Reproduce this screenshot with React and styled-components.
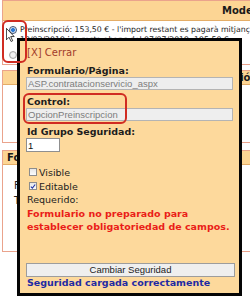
import React from "react";
import styled, { createGlobalStyle } from "styled-components";

const GlobalStyle = createGlobalStyle`
  html, body {
    margin: 0;
    padding: 0;
    background: #ffffff;
    overflow: hidden;
  }
  body {
    font-family: "DejaVu Sans", Verdana, sans-serif;
    color: #1e1e1e;
  }
`;

const Page = styled.div`
  position: relative;
  width: 250px;
  height: 303px;
  overflow: hidden;
  background: #fff;
`;

const Column = styled.div`
  display: flex;
  flex-direction: column;
  width: 600px;
  padding-left: 2px;
`;

const Panel = styled.section`
  box-sizing: border-box;
  height: ${({ $h }) => $h}px;
  margin-bottom: ${({ $gap }) => $gap || 0}px;
  border: 1px solid #eaa38c;
  display: flex;
  flex-direction: column;
`;

const PanelHeader = styled.h3`
  margin: 0;
  box-sizing: border-box;
  height: ${({ $h }) => $h || 14}px;
  background: #fcd594;
  border-bottom: 1px solid #e4ad67;
  font-size: 10px;
  font-weight: 700;
  line-height: ${({ $h }) => ($h || 14) - 1}px;
  padding-left: ${({ $indent }) => $indent || 4}px;
  white-space: nowrap;
  color: #1a1a1a;
`;

const OptionList = styled.div`
  display: flex;
  flex-direction: column;
  gap: 6px;
  padding: 4px 0 0 6px;
`;

const OptionRow = styled.label`
  display: flex;
  align-items: flex-start;
  gap: 3px;
  font-size: 7.8px;
  line-height: 9.5px;
  white-space: nowrap;
`;

const Radio = styled.span`
  flex: none;
  box-sizing: border-box;
  width: 8px;
  height: 8px;
  margin-top: 1px;
  border-radius: 50%;
  border: 1px solid ${({ $on }) => ($on ? "#3a4f73" : "#a8a8a8")};
  background: ${({ $on }) =>
    $on
      ? "radial-gradient(circle, #2f7bd6 0 1.6px, #bcd3ee 2.2px, #f4f7fb 3px)"
      : "radial-gradient(circle, #f2f2f2 0 2px, #dcdcdc 3px)"};
`;

const OptionText = styled.span`
  display: flex;
  flex-direction: column;
`;

const SplitBody = styled.div`
  display: flex;
  padding-top: ${({ $top }) => $top || 0}px;
  font-size: 10px;
  white-space: nowrap;
`;

const LabelColumn = styled.div`
  width: ${({ $w }) => $w}px;
  padding-left: ${({ $left }) => $left || 0}px;
  padding-top: ${({ $top }) => $top || 0}px;
  display: flex;
  flex-direction: column;
  line-height: ${({ $lh }) => $lh || 10}px;
`;

const ValueColumn = styled.div`
  display: flex;
  flex-direction: column;
  gap: ${({ $gap }) => $gap || 0}px;
  line-height: 10px;
`;

const Cell = styled.span`
  color: ${({ $tone }) => $tone || "#1e1e1e"};
  margin-top: ${({ $top }) => $top || 0}px;
`;

const FieldBox = styled.span`
  box-sizing: border-box;
  display: block;
  height: 11px;
  border: 1px solid #9a9a9a;
  font-family: "Liberation Sans", Arial, sans-serif;
  font-size: 9px;
  line-height: 9px;
  padding-left: 2px;
  color: #555;
`;

const OrangeButton = styled.span`
  box-sizing: border-box;
  display: block;
  height: 13px;
  margin-top: ${({ $top }) => $top || 0}px;
  background: #f0a04b;
  border: 1px solid #d7852c;
  font-size: 9px;
  line-height: 11px;
  color: #222;
`;

/* popup */

const Popup = styled.div`
  position: absolute;
  left: 17px;
  top: 38px;
  width: 225px;
  height: 258px;
  box-sizing: border-box;
  border: 3px solid #050505;
  background: #fdd99c;
  padding: 5px 6px 0 6px;
  display: flex;
  flex-direction: column;
  z-index: 5;
`;

const CloseLink = styled.a`
  font-size: 10px;
  line-height: 13px;
  color: #a23b2a;
  padding-left: 1px;
  margin-bottom: 5px;
`;

const Label = styled.div`
  font-size: 9.5px;
  line-height: 13px;
  font-weight: ${({ $plain }) => ($plain ? 400 : 700)};
  color: ${({ $tone }) => $tone || "#1c1c1c"};
  margin-top: ${({ $top }) => $top || 0}px;
  padding-left: 1px;
  white-space: nowrap;
`;

const TextInput = styled.input`
  box-sizing: border-box;
  width: ${({ $w }) => $w || 207}px;
  height: ${({ $h }) => $h || 13}px;
  margin: 0;
  padding: 0 1px;
  border: 1px solid ${({ $readOnly }) => ($readOnly ? "#b4b4b4" : "#8f8f8f")};
  background: ${({ $readOnly }) => ($readOnly ? "#eeeeee" : "#ffffff")};
  color: ${({ $readOnly }) => ($readOnly ? "#7d7d7d" : "#111")};
  font-family: "Liberation Sans", Arial, sans-serif;
  font-size: 9.5px;
  outline: none;
`;

const CheckRow = styled.label`
  display: flex;
  align-items: center;
  gap: 2px;
  height: 14px;
  padding-left: 3px;
  margin-top: ${({ $top }) => $top || 0}px;
  font-size: 9.5px;
  color: #1c1c1c;
`;

const CheckBox = styled.span`
  box-sizing: border-box;
  width: 8px;
  height: 8px;
  border: 1px solid #8c8c8c;
  background: linear-gradient(#e6e6e6, #fbfbfb);
  display: flex;
  align-items: center;
  justify-content: center;
`;

const ActionButton = styled.button`
  box-sizing: border-box;
  width: 209px;
  height: 14px;
  margin: 30px 0 0 0;
  padding: 0;
  border: 1px solid #9d9d9d;
  background: #efefef;
  font-family: "Liberation Sans", Arial, sans-serif;
  font-size: 9.5px;
  line-height: 12px;
  color: #1c1c1c;
`;

const Status = styled.div`
  font-size: 9.5px;
  line-height: 12px;
  font-weight: 700;
  color: #1f2aa3;
  padding-left: 1px;
  white-space: nowrap;
`;

/* annotations */

const Highlight = styled.div`
  position: absolute;
  box-sizing: border-box;
  left: ${({ $x }) => $x}px;
  top: ${({ $y }) => $y}px;
  width: ${({ $w }) => $w}px;
  height: ${({ $h }) => $h}px;
  border: 2.5px solid #d02c22;
  border-radius: 6px;
  z-index: 8;
  pointer-events: none;
`;

const Cursor = styled.svg`
  position: absolute;
  left: 6px;
  top: 28px;
  z-index: 9;
`;

const Tick = () => (
  <svg width="7" height="7" viewBox="0 0 7 7">
    <path d="M1 3.6 L2.8 5.4 L6 1.2" fill="none" stroke="#2438a8" strokeWidth="1.3" />
  </svg>
);

export default function App() {
  return (
    <>
      <GlobalStyle />
      <Page>
        <Column>
          <Panel $h={65} $gap={5}>
            <PanelHeader $h={20} $indent={219}>
              Modelo de pago
            </PanelHeader>
            <OptionList>
              <OptionRow>
                <Radio $on />
                <OptionText>
                  <span>Preinscripció: 153,50 € - l'import restant es pagarà mitjançant rebut</span>
                  <span>10/03/2019 i la resta abans del 07/07/2019: 195,50 €</span>
                </OptionText>
              </OptionRow>
              <OptionRow>
                <Radio />
                <OptionText>
                  <span>Pagament únic: 349,00 €</span>
                </OptionText>
              </OptionRow>
            </OptionList>
          </Panel>

          <Panel $h={73} $gap={7}>
            <PanelHeader $indent={193}>Inscripció</PanelHeader>
            <SplitBody $top={19}>
              <LabelColumn $w={240} $left={28}>
                <Cell>Observacions</Cell>
                <Cell>Estat</Cell>
              </LabelColumn>
              <ValueColumn>
                <Cell>necessàries</Cell>
                <Cell $tone="#8a1a2a">obligatori</Cell>
              </ValueColumn>
            </SplitBody>
          </Panel>

          <Panel $h={102}>
            <PanelHeader $h={14}>Formulari de contacte</PanelHeader>
            <SplitBody>
              <LabelColumn $w={240} $left={11} $top={13} $lh={15}>
                <Cell>Forma de pagament</Cell>
                <Cell>Telèfon</Cell>
              </LabelColumn>
              <ValueColumn $gap={3}>
                <FieldBox>8</FieldBox>
                <FieldBox>R</FieldBox>
                <OrangeButton $top={20}>r</OrangeButton>
                <Cell $top={4}>ar</Cell>
              </ValueColumn>
            </SplitBody>
          </Panel>
        </Column>

        <Popup>
          <CloseLink>[X] Cerrar</CloseLink>
          <Label>Formulario/Página:</Label>
          <TextInput $readOnly readOnly value="ASP.contratacionservicio_aspx" />
          <Label $top={5}>Control:</Label>
          <TextInput $readOnly readOnly value="OpcionPreinscripcion" />
          <Label $top={4}>Id Grupo Seguridad:</Label>
          <TextInput $w={34} $h={14} readOnly value="1" />
          <CheckRow $top={13}>
            <CheckBox />
            Visible
          </CheckRow>
          <CheckRow>
            <CheckBox>
              <Tick />
            </CheckBox>
            Editable
          </CheckRow>
          <Label $plain>Requerido:</Label>
          <Label $tone="#ea1d18" $top={1}>
            Formulario no preparado para
          </Label>
          <Label $tone="#ea1d18">establecer obligatoriedad de campos.</Label>
          <ActionButton>Cambiar Seguridad</ActionButton>
          <Status>Seguridad cargada correctamente</Status>
        </Popup>

        <Highlight $x={2} $y={20} $w={25} $h={43} />
        <Highlight $x={23} $y={93} $w={104} $h={31} />

        <Cursor width="9" height="14" viewBox="0 0 12 19">
          <path d="M0.5 0.5 L0.5 16 L4 12.5 L6.8 18.3 L9 17.3 L6.3 11.6 L11 11.6 Z" fill="#fff" stroke="#000" strokeWidth="1" />
        </Cursor>
      </Page>
    </>
  );
}
